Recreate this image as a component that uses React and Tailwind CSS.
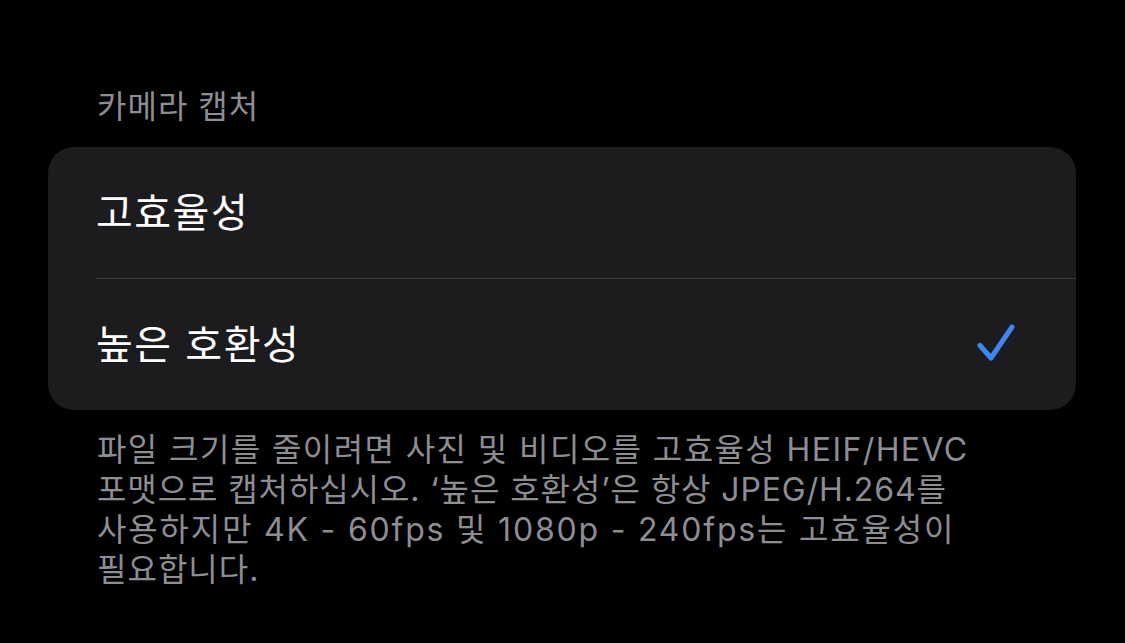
export default function App() {
  const font = { fontFamily: 'Inter, "Noto Sans CJK KR", sans-serif' };
  return (
    <div
      className="w-full h-[643px] bg-black pl-[48px] pr-[49px] pt-[87px] overflow-hidden"
      style={font}
    >
      <div className="pl-[49px] text-[32px] tracking-[1px] leading-[40px] text-[#8d8d92] mb-[20px]">
        카메라 캡처
      </div>
      <div className="bg-[#1c1c1e] rounded-[26px] overflow-hidden">
        <div className="h-[131px] pl-[48px] flex items-center text-[40px] tracking-[1.5px] text-white">
          고효율성
        </div>
        <div className="ml-[48px] h-px bg-[#38383a]" />
        <div className="h-[131px] pl-[48px] pr-[59px] flex items-center justify-between text-[40px] tracking-[1.5px] text-white">
          <span>높은 호환성</span>
          <svg width="42" height="42" viewBox="0 0 42 42" fill="none">
            <path
              d="M5 21.5 L16 34 L37 3"
              stroke="#3b87f7"
              strokeWidth="5"
              strokeLinecap="round"
              strokeLinejoin="round"
            />
          </svg>
        </div>
      </div>
      <div className="pl-[49px] mt-[20px] text-[32px] leading-[40px] text-[#8d8d92]">
        <div className="tracking-[1.4px]">파일 크기를 줄이려면 사진 및 비디오를 고효율성 HEIF/HEVC</div>
        <div className="tracking-[0.9px]">포맷으로 캡처하십시오. ‘높은 호환성’은 항상 JPEG/H.264를</div>
        <div className="tracking-[1.8px]">사용하지만 4K - 60fps 및 1080p - 240fps는 고효율성이</div>
        <div className="tracking-[1px]">필요합니다.</div>
      </div>
    </div>
  );
}
